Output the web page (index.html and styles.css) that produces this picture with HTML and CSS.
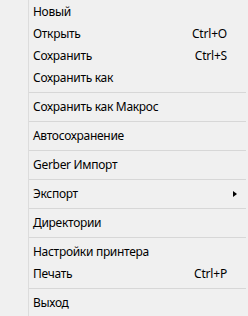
FILE: index.html
```html
<!DOCTYPE html>
<html>
<head>
<meta charset="utf-8">
<link rel="stylesheet" href="styles.css">
</head>
<body>
<div class="menu">
  <div class="item"><span class="label">Новый</span><span class="key"></span><span class="sub"></span></div>
  <div class="item"><span class="label">Открыть</span><span class="key">Ctrl+O</span><span class="sub"></span></div>
  <div class="item"><span class="label">Сохранить</span><span class="key">Ctrl+S</span><span class="sub"></span></div>
  <div class="item"><span class="label">Сохранить как</span><span class="key"></span><span class="sub"></span></div>
  <div class="sep"></div>
  <div class="item"><span class="label">Сохранить как Макрос</span><span class="key"></span><span class="sub"></span></div>
  <div class="sep"></div>
  <div class="item"><span class="label">Автосохранение</span><span class="key"></span><span class="sub"></span></div>
  <div class="sep"></div>
  <div class="item"><span class="label">Gerber Импорт</span><span class="key"></span><span class="sub"></span></div>
  <div class="sep"></div>
  <div class="item"><span class="label">Экспорт</span><span class="key"></span><span class="sub"><i class="arrow"></i></span></div>
  <div class="sep"></div>
  <div class="item"><span class="label">Директории</span><span class="key"></span><span class="sub"></span></div>
  <div class="sep"></div>
  <div class="item"><span class="label">Настройки принтера</span><span class="key"></span><span class="sub"></span></div>
  <div class="item"><span class="label">Печать</span><span class="key">Ctrl+P</span><span class="sub"></span></div>
  <div class="sep"></div>
  <div class="item"><span class="label">Выход</span><span class="key"></span><span class="sub"></span></div>
</div>
</body>
</html>
```

FILE: styles.css
```css
html, body {
  margin: 0;
  padding: 0;
  background: #f0f0f0;
}
body {
  width: 248px;
  height: 316px;
  overflow: hidden;
}
.menu {
  margin-left: 28px;
  border-left: 1px solid #dcdcdc;
  padding-top: 1px;
  height: 315px;
  font-family: "Noto Sans", "Open Sans", sans-serif;
  font-size: 12px;
  letter-spacing: -0.3px;
  color: #000;
}
.item {
  display: grid;
  grid-template-columns: 1fr auto 21px;
  align-items: center;
  height: 22px;
  line-height: 22px;
  padding-left: 4px;
}
.key {
  text-align: right;
  letter-spacing: -0.2px;
}
.sub {
  position: relative;
  height: 22px;
}
.arrow {
  position: absolute;
  left: 6px;
  top: 8px;
  width: 0;
  height: 0;
  border-left: 4px solid #000;
  border-top: 3.5px solid transparent;
  border-bottom: 3.5px solid transparent;
}
.sep {
  height: 0;
  margin: 3px 2px 3px 0;
  border-top: 1px solid #d7d7d7;
}
```
